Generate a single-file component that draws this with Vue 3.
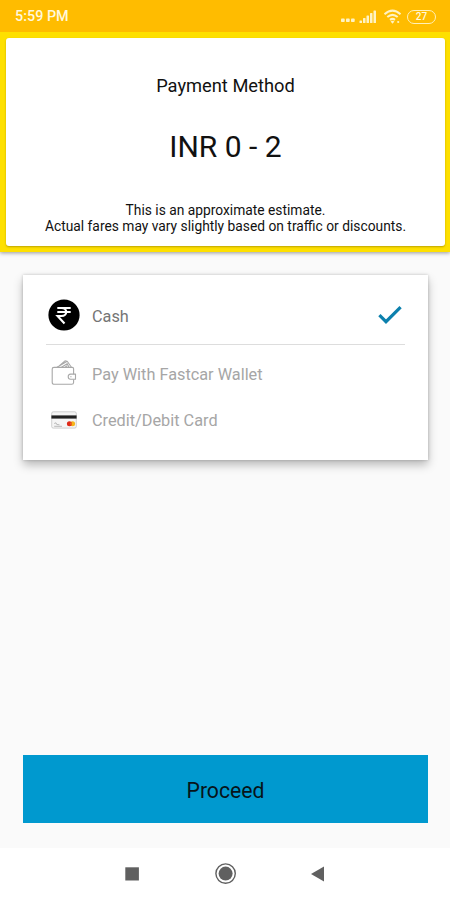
<template>
    <div class="screen">
        <header class="status-bar">
            <span class="time">5:59 PM</span>
            <div class="status-icons">
                <svg class="dots" width="15" height="14" viewBox="0 0 15 14">
                    <rect v-for="x in [1, 6, 11]" :key="x" :x="x" y="8.6" width="3.7" height="3.4" rx="0.8" />
                </svg>
                <svg class="signal" width="18" height="14" viewBox="0 0 18 14">
                    <rect v-for="(h, i) in [2.5, 5, 7.5, 10, 12.5]" :key="h" :x="0.5 + i * 3.5" :y="13 - h" width="2.5" :height="h" rx="0.6" />
                </svg>
                <svg class="wifi" width="20" height="16" viewBox="0 0 20 16">
                    <path d="M1.5 5.2Q9.5 -2 17.5 5.2M4.3 8.1Q9.5 3.6 14.7 8.1M7 10.9Q9.5 8.9 12 10.9" />
                    <path class="solid" d="M9.5 14.7L7.6 12.6Q9.5 11.1 11.4 12.6Z" />
                    <circle class="solid" cx="15.2" cy="13" r="1.1" />
                </svg>
                <span class="battery"><span class="level">{{ battery }}</span></span>
            </div>
        </header>

        <section class="summary">
            <div class="summary-card">
                <h1>Payment Method</h1>
                <p class="fare">INR 0 - 2</p>
                <p class="note">This is an approximate estimate.<br><span class="note-detail">Actual fares may vary slightly based on traffic or discounts.</span></p>
            </div>
        </section>

        <main class="content">
            <ul class="options">
                <li
                    v-for="option in options"
                    :key="option.id"
                    class="option"
                    :class="[option.id, { selected: option.id === selected }]"
                    @click="selected = option.id"
                >
                    <svg v-if="option.id === 'cash'" class="icon" width="32" height="32" viewBox="0 0 32 32">
                        <circle cx="16" cy="16" r="15.6" fill="#000" />
                        <path d="M9.3 9H22.7M9.3 13H22.7M9.3 9H13.5C19.8 9 19.8 17 13.5 17H9.6L16.5 24.5" fill="none" stroke="#fff" stroke-width="2.1" />
                    </svg>
                    <svg v-else-if="option.id === 'wallet'" class="icon" width="32" height="32" viewBox="0 0 32 32">
                        <g fill="none" stroke="#a8a8a8" stroke-width="1.1" stroke-linejoin="round">
                            <path d="M25.6 16.3V10.8Q25.6 9.4 24.2 9.4H6Q4.2 9.4 4.2 11V24.2Q4.2 26.3 6.3 26.3H23.7Q25.6 26.3 25.6 24.4V21.4" />
                            <path d="M27.5 16.1H22.6Q20.2 16.3 20.2 18.7T22.6 21.3H27.5ZM22.3 18.7H23.5" />
                            <path d="M9 9.2L19.2 3.3L23.4 9.2M11.2 7.9L17 2.8L19 3.4M13.5 9.2L19.2 5.7L21 9.2M17.3 9L19.2 7.8" />
                        </g>
                    </svg>
                    <svg v-else class="icon" width="32" height="32" viewBox="0 0 32 32">
                        <rect x="3.7" y="7.8" width="24.6" height="16.3" rx="1.5" fill="#f5f5f5" stroke="#bdbdbd" stroke-width="0.7" />
                        <rect x="3.4" y="11.4" width="25.2" height="3.2" fill="#222" />
                        <path d="M6.2 19.5L8 18.8L8.8 20.5L11.5 20.8M6.2 22.3H14" fill="none" stroke="#aaa" stroke-width="0.8" />
                        <circle cx="24.6" cy="19.7" r="2.5" fill="#f5b51b" />
                        <circle cx="21.4" cy="19.7" r="2.5" fill="#df2918" />
                        <path d="M23 17.8Q24.6 19.7 23 21.6Q21.4 19.7 23 17.8" fill="#f47a20" />
                    </svg>
                    <span class="label">{{ option.label }}</span>
                    <svg v-if="option.id === selected" class="check" width="26" height="20" viewBox="0 0 26 20">
                        <path d="M2.4 10.2L9 16.7L23.6 2.2" />
                    </svg>
                </li>
            </ul>
            <button class="proceed" type="button">Proceed</button>
        </main>

        <nav class="nav-bar">
            <svg width="32" height="32" viewBox="0 0 32 32"><rect x="9.3" y="9.3" width="13.6" height="13.2" /></svg>
            <svg width="32" height="32" viewBox="0 0 32 32">
                <circle cx="16.6" cy="15.6" r="9.7" class="ring" />
                <circle cx="16.6" cy="15.6" r="7" />
            </svg>
            <svg width="32" height="32" viewBox="0 0 32 32"><path d="M9 16L22 8.6V23.6Z" /></svg>
        </nav>
    </div>
</template>

<script setup>
import { ref } from 'vue';

const battery = ref(27);
const selected = ref('cash');

const options = [
    { id: 'cash', label: 'Cash' },
    { id: 'wallet', label: 'Pay With Fastcar Wallet' },
    { id: 'card', label: 'Credit/Debit Card' },
];
</script>

<style>
body {
    margin: 0;
}
</style>

<style scoped>
.screen {
    display: flex;
    flex-direction: column;
    width: 450px;
    height: 900px;
    overflow: hidden;
    background: #fafafa;
    color: #111;
    font-family: Roboto, sans-serif;
}

.status-bar {
    display: flex;
    flex: none;
    align-items: center;
    justify-content: space-between;
    box-sizing: border-box;
    height: 32px;
    padding: 1px 14px 0 15px;
    background: #ffbc00;
    color: #fff8dc;
}

.time {
    font-size: 14.4px;
    font-weight: 500;
}

.status-icons {
    display: flex;
    align-items: center;
    fill: #fff3c4;
}

.signal {
    margin-left: 4px;
}

.wifi {
    margin-left: 6px;
    fill: none;
    stroke: #fff3c4;
    stroke-width: 2;
}

.wifi .solid {
    fill: #fff3c4;
    stroke: none;
}

.battery {
    display: flex;
    align-items: center;
    justify-content: center;
    box-sizing: border-box;
    width: 29px;
    height: 14px;
    margin-left: 4px;
    border: 1.5px solid #fff0b8;
    border-radius: 7px;
    font-size: 10px;
    font-weight: 500;
}

.summary {
    flex: none;
    box-sizing: border-box;
    height: 220px;
    padding: 6px 5px 6px 6px;
    background: #fee000;
    box-shadow: 0 1px 4px rgba(0, 0, 0, 0.4);
    clip-path: inset(0 0 -8px 0);
}

.summary-card {
    box-sizing: border-box;
    height: 208px;
    padding-top: 36px;
    border-radius: 3px;
    background: #fff;
    box-shadow: 0 1px 2px rgba(110, 90, 0, 0.45);
    text-align: center;
}

h1 {
    margin: 0;
    font-size: 18.3px;
    font-weight: 400;
    line-height: 24px;
}

.fare {
    margin: 31px 0 0;
    font-size: 30px;
    line-height: 36px;
}

.note {
    margin: 37px 0 0;
    font-size: 13.8px;
    line-height: 16px;
}

.content {
    display: flex;
    flex: 1;
    flex-direction: column;
    justify-content: space-between;
    padding: 23px 22px 25px 23px;
}

.options {
    margin: 0;
    padding: 11px 23px 17px;
    list-style: none;
    background: #fff;
    box-shadow: 0 5px 9px rgba(0, 0, 0, 0.26), 0 0 3px rgba(0, 0, 0, 0.2);
}

.option {
    display: flex;
    align-items: center;
    height: 46px;
    color: #a6a6a6;
    font-size: 16.3px;
}

.option.cash {
    height: 58px;
    margin-bottom: 6px;
    border-bottom: 1px solid #ddd;
}

.option.selected {
    color: #757575;
}

.icon {
    margin-left: 2px;
}

.label {
    flex: 1;
    margin-left: 12px;
}

.cash .label {
    padding-top: 2px;
}

.check {
    margin-right: 2px;
    fill: none;
    stroke: #0c80ad;
    stroke-width: 3.2;
}

.proceed {
    height: 68px;
    padding: 2px 0 0;
    border: 0;
    background: #0099cf;
    color: #071419;
    font-family: inherit;
    font-size: 21.2px;
}

.nav-bar {
    display: flex;
    flex: none;
    align-items: center;
    justify-content: space-between;
    box-sizing: border-box;
    height: 52px;
    padding: 0 116px;
    background: #fff;
    fill: #606060;
}

.ring {
    fill: none;
    stroke: #606060;
    stroke-width: 1.4;
}
</style>
